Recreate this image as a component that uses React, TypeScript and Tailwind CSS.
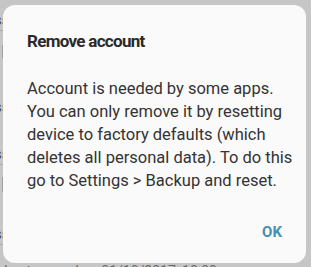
import React from "react";

function BehindRow({ top }: { top: string }) {
  return (
    <div className={`flex flex-col ${top}`}>
      <div className="h-[14px] text-[15px] leading-[14px] text-[#4a4a4a] -ml-[6px]">ss</div>
      <div className="mt-[3px] h-px w-[3px] bg-[#a8a8a8]" />
    </div>
  );
}

export default function App() {
  return (
    <div className="relative w-[311px] h-[267px] overflow-hidden bg-[#c6c6c6] font-['Roboto',sans-serif]">
      <div className="flex flex-col">
        <BehindRow top="mt-[13px]" />
        <div className="mt-[14px] ml-[2px] h-[13px] w-[2px] bg-[#a0a0a0]" />
        <div className="mt-[42px] h-[14px] text-[15px] leading-[14px] text-[#4a4a4a] -ml-[6px]">ss</div>
        <BehindRow top="mt-[33px]" />
        <div className="mt-[12px] ml-[2px] h-[15px] w-[2px] bg-[#a0a0a0]" />
        <BehindRow top="mt-[35px]" />
        <div className="mt-[18px] ml-[4px] whitespace-nowrap text-[14px] leading-[16px] text-[#6a6a6a]">
          Last synced on 01/10/2017, 10:00
        </div>
      </div>

      <div className="absolute left-[3px] top-[5px] flex h-[258px] w-[303px] flex-col rounded-[12px] bg-[#fafafa] pl-[24px] pr-[24px] pt-[24px] pb-[21px]">
        <div className="text-[17px] leading-[24px] font-bold tracking-[-0.7px] text-[#2a2a2a]">
          Remove account
        </div>
        <div className="mt-[24px] w-[266px] text-[16.5px] leading-[23px] text-[#333333]">
          Account is needed by some apps. You can only remove it by resetting device to factory defaults (which deletes all personal data). To do this go to Settings &gt; Backup and reset.
        </div>
        <div className="mt-auto flex justify-end">
          <span className="text-[15px] leading-[20px] font-bold text-[#4691b3]">OK</span>
        </div>
      </div>
    </div>
  );
}
